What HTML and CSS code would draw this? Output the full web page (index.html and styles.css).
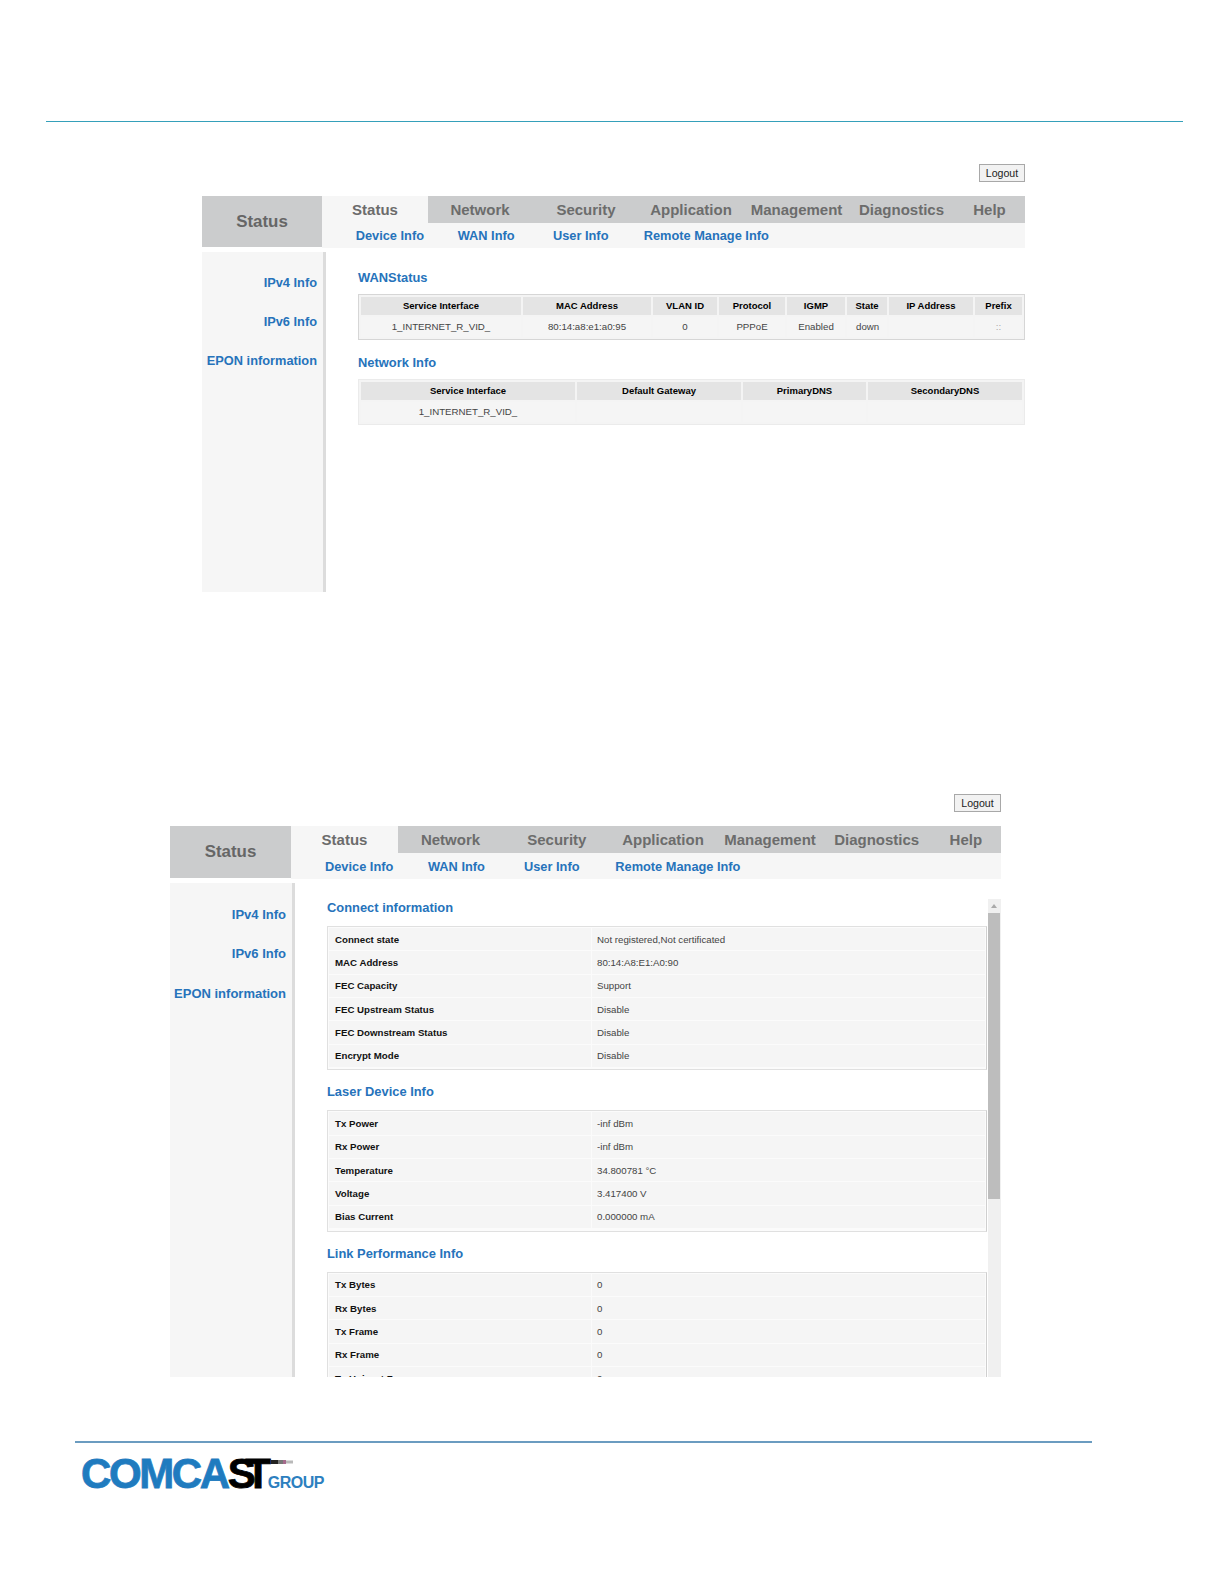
FILE: index.html
```html
<!DOCTYPE html>
<html lang="en">
<head>
<meta charset="utf-8">
<title>Status</title>
<link rel="stylesheet" href="styles.css">
</head>
<body>
<div class="rule-top"></div>

<section class="screen screen-a">
  <div class="logout-row"><button class="logout">Logout</button></div>
  <nav class="nav">
    <div class="nav-title">Status</div>
    <div class="nav-right">
      <div class="tabs">
        <a class="tab active">Status</a><a class="tab">Network</a><a class="tab">Security</a><a class="tab">Application</a><a class="tab">Management</a><a class="tab">Diagnostics</a><a class="tab">Help</a>
      </div>
      <div class="sub"><a>Device Info</a><a>WAN Info</a><a>User Info</a><a>Remote Manage Info</a></div>
    </div>
  </nav>
  <div class="body">
    <aside class="side"><a>IPv4 Info</a><a>IPv6 Info</a><a>EPON information</a></aside>
    <div class="main">
      <h3 class="head head-first">WANStatus</h3>
      <table class="grid wan">
        <colgroup><col><col><col><col><col><col><col><col></colgroup>
        <tr><th>Service Interface</th><th>MAC Address</th><th>VLAN ID</th><th>Protocol</th><th>IGMP</th><th>State</th><th>IP Address</th><th>Prefix</th></tr>
        <tr><td>1_INTERNET_R_VID_</td><td>80:14:a8:e1:a0:95</td><td>0</td><td>PPPoE</td><td>Enabled</td><td class="left">down</td><td></td><td class="faint">::</td></tr>
      </table>
      <h3 class="head">Network Info</h3>
      <table class="grid net">
        <colgroup><col><col><col><col></colgroup>
        <tr><th>Service Interface</th><th>Default Gateway</th><th>PrimaryDNS</th><th>SecondaryDNS</th></tr>
        <tr><td>1_INTERNET_R_VID_</td><td></td><td></td><td></td></tr>
      </table>
    </div>
  </div>
</section>

<section class="screen screen-b">
  <div class="logout-row"><button class="logout">Logout</button></div>
  <nav class="nav">
    <div class="nav-title">Status</div>
    <div class="nav-right">
      <div class="tabs">
        <a class="tab active">Status</a><a class="tab">Network</a><a class="tab">Security</a><a class="tab">Application</a><a class="tab">Management</a><a class="tab">Diagnostics</a><a class="tab">Help</a>
      </div>
      <div class="sub"><a>Device Info</a><a>WAN Info</a><a>User Info</a><a>Remote Manage Info</a></div>
    </div>
  </nav>
  <div class="body">
    <aside class="side"><a>IPv4 Info</a><a>IPv6 Info</a><a>EPON information</a></aside>
    <div class="frame">
      <div class="scroll-content">
        <h3 class="head">Connect information</h3>
        <table class="kv">
          <colgroup><col><col></colgroup>
          <tr><th>Connect state</th><td>Not registered,Not certificated</td></tr>
          <tr><th>MAC Address</th><td>80:14:A8:E1:A0:90</td></tr>
          <tr><th>FEC Capacity</th><td>Support</td></tr>
          <tr><th>FEC Upstream Status</th><td>Disable</td></tr>
          <tr><th>FEC Downstream Status</th><td>Disable</td></tr>
          <tr><th>Encrypt Mode</th><td>Disable</td></tr>
        </table>
        <h3 class="head">Laser Device Info</h3>
        <table class="kv">
          <colgroup><col><col></colgroup>
          <tr><th>Tx Power</th><td>-inf dBm</td></tr>
          <tr><th>Rx Power</th><td>-inf dBm</td></tr>
          <tr><th>Temperature</th><td>34.800781 °C</td></tr>
          <tr><th>Voltage</th><td>3.417400 V</td></tr>
          <tr><th>Bias Current</th><td>0.000000 mA</td></tr>
        </table>
        <h3 class="head">Link Performance Info</h3>
        <table class="kv">
          <colgroup><col><col></colgroup>
          <tr><th>Tx Bytes</th><td>0</td></tr>
          <tr><th>Rx Bytes</th><td>0</td></tr>
          <tr><th>Tx Frame</th><td>0</td></tr>
          <tr><th>Rx Frame</th><td>0</td></tr>
          <tr><th>Tx Unicast Frame</th><td>0</td></tr>
        </table>
      </div>
      <div class="scrollbar">
        <div class="arrow"></div>
        <div class="thumb"></div>
      </div>
    </div>
  </div>
</section>

<div class="rule-bottom"></div>
<div class="logo">
  <span class="logo-blue">COMCA</span><span class="logo-s">S</span><span class="logo-t">T</span><span class="logo-group">GROUP</span>
  <svg class="cable" width="22" height="6" viewBox="0 0 22 6" aria-hidden="true">
    <rect x="0" y="1" width="7" height="4" fill="#222"/>
    <rect x="7" y="1" width="5" height="4" fill="#777"/>
    <rect x="12" y="1" width="3" height="4" fill="#a56a8c"/>
    <rect x="15" y="1.5" width="7" height="3" fill="#b9b9b9"/>
  </svg>
</div>
</body>
</html>
```

FILE: styles.css
```css
* { box-sizing: border-box; }
html, body { margin: 0; padding: 0; background: #fff; }
body { font-family: "Liberation Sans", Arial, sans-serif; color: #000; height: 1584px; overflow: hidden; }

.rule-top { height: 1px; margin: 121px 0 0 46px; width: 1137px; background: #35a0ba; }
.rule-bottom { height: 2px; margin: 64px 0 0 75px; width: 1017px; background: #6b9cc0; }

.screen-a { margin: 42px 0 0 202px; width: 823px; }
.screen-b { margin: 202px 0 0 170px; width: 831px; }

.logout-row { display: flex; justify-content: flex-end; height: 18px; margin-bottom: 14px; }
.logout { width: 46px; height: 18px; padding: 0; font: 10.6px "Liberation Sans", Arial, sans-serif; color: #222; background: #f2f2f2; border: 1px solid #a8a8a8; border-radius: 0; }
.screen-b .logout { width: 47px; }

.nav { display: flex; height: 52px; }
.nav-title { height: 51px; background: #cbcccd; color: #666; font-size: 16.9px; font-weight: bold; display: flex; align-items: center; justify-content: center; }
.screen-a .nav-title { width: 120px; }
.screen-b .nav { height: 53px; }
.screen-b .nav-title { width: 121px; height: 52px; }
.nav-right { flex: 1; display: flex; flex-direction: column; min-width: 0; }
.tabs { display: grid; height: 27px; background: #cbcccd; }
.screen-a .tabs { grid-template-columns: 106px 104px 108px 102px 109px 101px 73px; }
.screen-b .tabs { grid-template-columns: 107px 105px 107.6px 104.8px 109.2px 104.2px 72.2px; }
.tab { display: flex; align-items: center; justify-content: center; font-size: 15px; font-weight: bold; color: #6c6c6c; white-space: nowrap; }
.screen-a .tab { padding-bottom: 1px; }
.tab:last-child { padding-left: 2px; }
.tab.active { background: #f6f6f6; }
.sub { flex: 1; background: #f6f6f6; display: grid; align-items: center; font-size: 12.8px; font-weight: bold; color: #2673bb; white-space: nowrap; }
.screen-a .sub { padding-left: 33.7px; grid-template-columns: 102px 95.3px 90.7px 1fr; }
.screen-b .sub { padding-left: 34px; grid-template-columns: 103px 96px 91.3px 1fr; }

.body { display: flex; margin-top: 4px; }
.side { flex: none; width: 124px; background: #f6f6f6; border-right: 3px solid #dcdcdc; display: flex; flex-direction: column; align-items: flex-end; padding: 21px 6px 0 0; gap: 19px; font-size: 12.8px; font-weight: bold; color: #2673bb; }
.side a { display: block; height: 20px; line-height: 20px; white-space: nowrap; }
.screen-a .side { height: 340px; }
.screen-b .side { width: 125px; height: 494px; padding: 21.5px 6px 0 0; gap: 19.5px; font-size: 13px; }

.main { flex: 1; min-width: 0; padding: 0 0 0 32px; }
.head { margin: 0; padding: 13px 0 9px; height: 40px; font-size: 12.9px; line-height: 18px; font-weight: bold; color: #2673bb; white-space: nowrap; }
.main .head { padding: 14px 0 7px; height: 39px; }
.main .head-first { padding: 16.5px 0 7.5px; height: 42px; }

.grid { width: 667px; table-layout: fixed; border-collapse: separate; border-spacing: 2px; border: 1px solid #d6d6d6; background: #f4f4f4; }
.grid.net { border-color: #ebebeb; }
.grid th { height: 18px; padding: 0 0 1px; background: #e4e4e4; font-size: 9.5px; font-weight: bold; color: #000; text-align: center; white-space: nowrap; }
.grid td { height: 20px; padding: 0 0 2px; background: #f5f5f5; font-size: 9.7px; color: #444; text-align: center; white-space: nowrap; }
.grid td.left { text-align: left; padding-left: 9px; }
.grid td.faint { color: #aaa; }
.wan col:nth-child(1) { width: 160px; }
.wan col:nth-child(2) { width: 128px; }
.wan col:nth-child(3) { width: 64px; }
.wan col:nth-child(4) { width: 66px; }
.wan col:nth-child(5) { width: 58px; }
.wan col:nth-child(6) { width: 40px; }
.wan col:nth-child(7) { width: 84px; }
.wan col:nth-child(8) { width: 47px; }
.net col:nth-child(1) { width: 214px; }
.net col:nth-child(2) { width: 164px; }
.net col:nth-child(3) { width: 123px; }
.net col:nth-child(4) { width: 154px; }

.frame { flex: 1; min-width: 0; height: 494px; padding-left: 32px; display: flex; overflow: hidden; }
.scroll-content { width: 660px; flex: none; height: 494px; overflow: hidden; padding-top: 3px; }
.kv { width: 660px; table-layout: fixed; border-collapse: separate; border-spacing: 1px; border: 1px solid #e0e0e0; border-right-color: #cfcfcf; background: #fbfbfb; padding-bottom: 1.5px; }
.kv col:nth-child(1) { width: 262px; }
.kv th, .kv td { height: 22.33px; padding: 0; font-size: 9.7px; background: #f5f5f5; text-align: left; white-space: nowrap; }
.kv th { padding-left: 6px; font-weight: bold; color: #111; }
.kv td { padding-left: 5px; color: #444; }

.scrollbar { flex: none; width: 13px; margin: 16px 0 0 1px; background: #f0f0f0; position: relative; }
.arrow { height: 14px; position: relative; }
.arrow::after { content: ""; position: absolute; left: 3px; top: 5px; border-left: 3.5px solid transparent; border-right: 3.5px solid transparent; border-bottom: 4px solid #aaa; }
.thumb { width: 12px; height: 286px; background: #bdbdbd; }

.logo { position: relative; margin: 10px 0 0 81px; height: 42px; display: flex; align-items: baseline; font-weight: bold; line-height: 42px; white-space: nowrap; }
.logo-blue, .logo-s, .logo-t { font-size: 42px; -webkit-text-stroke: 0.8px currentColor; }
.logo-blue { letter-spacing: -2.4px; color: #1f7bbf; }
.logo-s { letter-spacing: -10.5px; color: #000; }
.logo-t { letter-spacing: -3px; color: #000; }
.logo-group { font-size: 16px; letter-spacing: -0.5px; color: #2c80bf; }
.cable { position: absolute; left: 190px; top: 5.5px; }
```
